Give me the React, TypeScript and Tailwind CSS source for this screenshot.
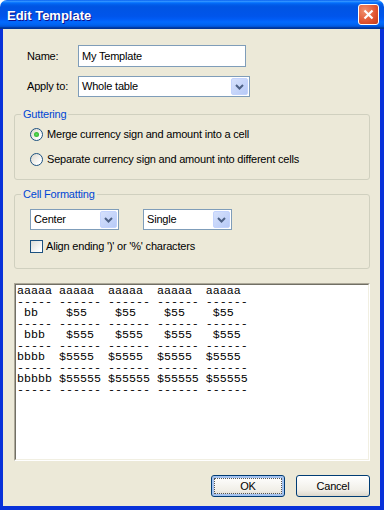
import type { ReactNode } from "react";

const rows = [
    "aaaaa aaaaa  aaaaa  aaaaa  aaaaa",
    "----- ------ ------ ------ ------",
    " bb    $55    $55    $55    $55",
    "----- ------ ------ ------ ------",
    " bbb   $555   $555   $555   $555",
    "----- ------ ------ ------ ------",
    "bbbb  $5555  $5555  $5555  $5555",
    "----- ------ ------ ------ ------",
    "bbbbb $55555 $55555 $55555 $55555",
    "----- ------ ------ ------ ------",
];

const DropButton = () => (
    <span className="flex h-full w-[17px] items-center justify-center rounded-[2px] border border-[#c3d3fd] bg-[linear-gradient(135deg,#d6e1fc,#b7caf7)]">
        <svg width="9" height="6" viewBox="0 0 9 6">
            <path d="M1 1l3.5 3.5L8 1" stroke="#4d6185" strokeWidth="2" fill="none" />
        </svg>
    </span>
);

const Combo = ({ value, width }: { value: string; width: string }) => (
    <div className={`flex h-[21px] items-stretch border border-[#7f9db9] bg-white p-[1px] ${width}`}>
        <span className="flex flex-1 items-center pl-[2px]">{value}</span>
        <DropButton />
    </div>
);

const Radio = ({ checked }: { checked?: boolean }) => (
    <span className="flex h-[13px] w-[13px] shrink-0 items-center justify-center rounded-full border border-[#1c5180] bg-[linear-gradient(135deg,#dcd7cb,#ffffff_80%)]">
        {checked && (
            <span className="h-[5px] w-[5px] rounded-full bg-[radial-gradient(circle,#5ee25a,#21a121)]" />
        )}
    </span>
);

const Group = ({ title, children }: { title: string; children: ReactNode }) => (
    <fieldset className="rounded-[3px] border border-[#d0d0bf] p-0">
        <legend className="ml-[6px] px-[2px] leading-[13px] text-[#0046d5]">{title}</legend>
        {children}
    </fieldset>
);

const XpButton = ({ children, focused }: { children: ReactNode; focused?: boolean }) => (
    <button
        className={`flex h-[22px] w-[74px] items-center justify-center rounded-[3px] border border-[#003c74] bg-[linear-gradient(180deg,#ffffff,#f1efe8_70%,#dcd8cc)] p-[2px] ${
            focused ? "shadow-[inset_0_0_0_2px_#a4c3f0]" : ""
        }`}
    >
        <span
            className={`flex h-full w-full items-center justify-center ${
                focused ? "border border-dotted border-[#555]" : ""
            }`}
        >
            {children}
        </span>
    </button>
);

export default function App() {
    return (
        <div className="flex h-[510px] w-[384px] flex-col font-['Liberation_Sans',Arial,sans-serif] text-[11px] tracking-[-0.2px] text-black">
            <div className="flex h-[29px] shrink-0 items-center justify-between rounded-t-[7px] bg-[linear-gradient(to_bottom,#0058ee,#3593ff_4%,#288eff_6%,#127dff_8%,#036ffc_10%,#0262ee_14%,#0057e5_20%,#0054e3_24%,#0055eb_56%,#005bf5_66%,#026afe_76%,#0062ef_86%,#0052d6_92%,#0040ab_94%,#003092_100%)] pl-[7px] pr-[5px]">
                <span className="pt-[2px] text-[13px] font-bold tracking-normal text-white [text-shadow:1px_1px_#0f1089]">
                    Edit Template
                </span>
                <span className="flex h-[21px] w-[21px] items-center justify-center rounded-[3px] border border-white bg-[radial-gradient(circle_at_30%_30%,#f0906e,#e0532f_60%,#c13c1a)]">
                    <svg width="11" height="11" viewBox="0 0 11 11">
                        <path d="M1.5 1.5l8 8M9.5 1.5l-8 8" stroke="white" strokeWidth="2.2" />
                    </svg>
                </span>
            </div>

            <div className="flex flex-1 flex-col border-r-[4px] border-b-[4px] border-l-[3px] border-[#0831d9] bg-[#ece9d8] pt-[16px] pr-[10px] pl-[11px]">
                <div className="flex items-center pl-[13px]">
                    <span className="w-[51px]">Name:</span>
                    <div className="flex h-[22px] w-[168px] items-center border border-[#7f9db9] bg-white pl-[3px]">
                        My Template
                    </div>
                </div>
                <div className="mt-[9px] flex items-center pl-[13px]">
                    <span className="w-[51px]">Apply to:</span>
                    <Combo value="Whole table" width="w-[172px]" />
                </div>

                <div className="mt-[11px]">
                    <Group title="Guttering">
                        <div className="flex flex-col gap-[12px] pt-[7px] pb-[13px] pl-[15px]">
                            <div className="flex h-[13px] items-center gap-[4px]">
                                <Radio checked />
                                <span>Merge currency sign and amount into a cell</span>
                            </div>
                            <div className="flex h-[13px] items-center gap-[4px]">
                                <Radio />
                                <span>Separate currency sign and amount into different cells</span>
                            </div>
                        </div>
                    </Group>
                </div>

                <div className="mt-[8px]">
                    <Group title="Cell Formatting">
                        <div className="flex flex-col pt-[8px] pb-[15px] pl-[15px]">
                            <div className="flex gap-[24px]">
                                <Combo value="Center" width="w-[89px]" />
                                <Combo value="Single" width="w-[89px]" />
                            </div>
                            <div className="mt-[10px] flex h-[13px] items-center gap-[3px]">
                                <span className="h-[13px] w-[13px] border border-[#1c5180] bg-[linear-gradient(135deg,#dcdcd7,#ffffff_85%)]" />
                                <span>Align ending ')' or '%' characters</span>
                            </div>
                        </div>
                    </Group>
                </div>

                <div className="mt-[14px] h-[178px] border border-t-[#aca899] border-r-white border-b-white border-l-[#aca899]">
                    <div className="h-full border border-t-[#716f64] border-r-[#f1efe2] border-b-[#f1efe2] border-l-[#716f64] bg-white pt-[1px] pl-[1px]">
                        <pre className="font-['Liberation_Mono','Courier_New',monospace] text-[11.67px] leading-[11px] tracking-normal">
                            {rows.join("\n")}
                        </pre>
                    </div>
                </div>

                <div className="mt-[14px] flex justify-end gap-[11px]">
                    <XpButton focused>OK</XpButton>
                    <XpButton>Cancel</XpButton>
                </div>
            </div>
        </div>
    );
}
